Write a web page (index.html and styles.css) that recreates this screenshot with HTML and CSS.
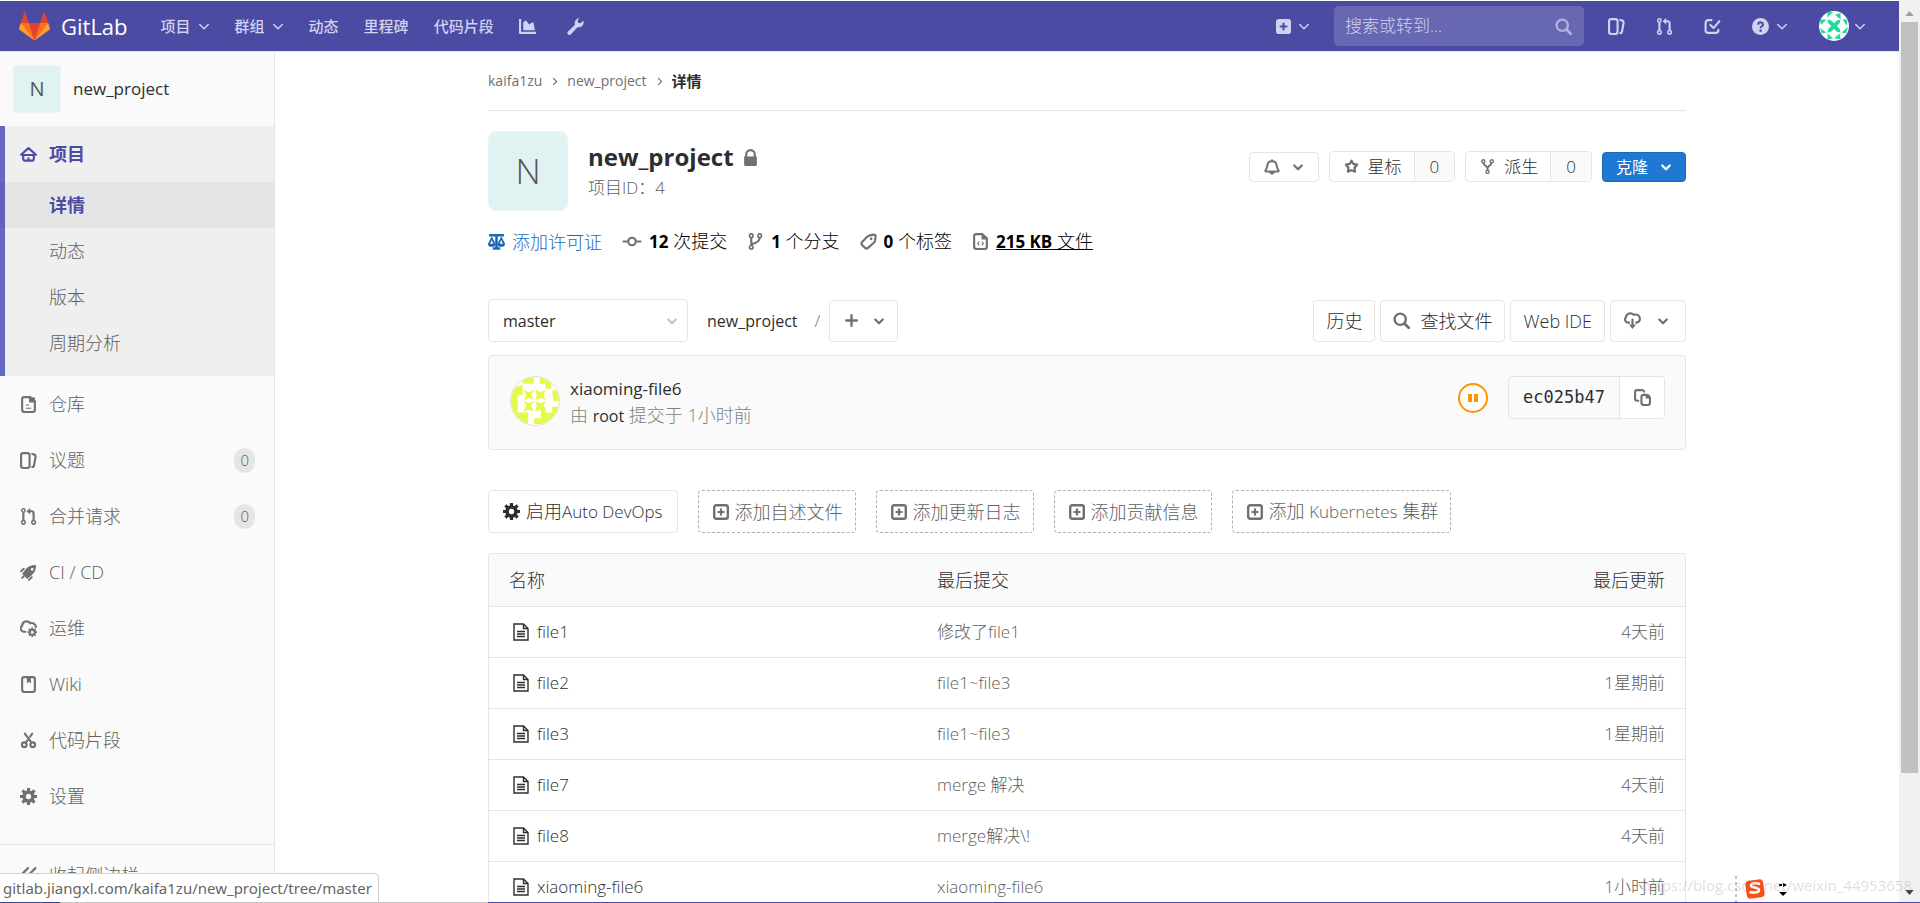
FILE: index.html
```html
<!DOCTYPE html>
<html lang="zh-CN">
<head>
<meta charset="utf-8">
<title>new_project · GitLab</title>
<link rel="stylesheet" href="styles.css">
</head>
<body>
<svg class="sprite" aria-hidden="true">
  <symbol id="chevron" viewBox="0 0 16 16"><path d="M8 10.243l-4.95-4.95a1 1 0 0 0-1.414 1.414l5.657 5.657a.997.997 0 0 0 1.414 0l5.657-5.657a1 1 0 0 0-1.414-1.414L8 10.243z"/></symbol>
  <symbol id="chevron-bold" viewBox="0 0 16 16"><path fill="none" stroke="currentColor" stroke-width="3" stroke-linecap="round" stroke-linejoin="round" d="M3 6l5 5 5-5"/></symbol>
  <symbol id="issues" viewBox="0 0 16 16"><path d="M10.458 15.012l.311.055a3 3 0 0 0 3.476-2.433l1.389-7.879A3 3 0 0 0 13.2 1.28L11.23.933a3.002 3.002 0 0 0-.824-.031c.364.59.58 1.28.602 2.02l1.845.325a1 1 0 0 1 .811 1.158l-1.389 7.879a1 1 0 0 1-1.158.81l-.118-.02a3.98 3.98 0 0 1-.541 1.938zM3 0h4a3 3 0 0 1 3 3v10a3 3 0 0 1-3 3H3a3 3 0 0 1-3-3V3a3 3 0 0 1 3-3zm0 2a1 1 0 0 0-1 1v10a1 1 0 0 0 1 1h4a1 1 0 0 0 1-1V3a1 1 0 0 0-1-1H3z"/></symbol>
  <symbol id="merge" viewBox="0 0 16 16"><g fill="none" stroke="currentColor"><g stroke-width="1.400"><circle cx="3.200" cy="2.300" r="1.600"/><circle cx="3.200" cy="13.500" r="1.700"/><circle cx="12.800" cy="13.500" r="1.700"/></g><path stroke-width="2" d="M3.200 4v7.800M12.800 11.800V5a2 2 0 0 0-2-2H8"/></g><path d="M6.200 3L9.500 0v6z"/></symbol>
  <symbol id="todo" viewBox="0 0 16 16"><g fill="none" stroke="currentColor" stroke-width="2" stroke-linecap="round"><path d="M7 2H4a2.500 2.500 0 0 0-2.500 2.500v7A2.500 2.500 0 0 0 4 14h7a2.500 2.500 0 0 0 2.500-2.500V11"/><path d="M6 6.500l3 3L14.500 3" stroke-linejoin="round"/></g></symbol>
  <symbol id="help" viewBox="0 0 16 16"><circle cx="8" cy="8" r="8"/><path d="M5.800 6.300C5.800 3.300 10.400 3.400 10.300 6.200 10.200 7.900 8.100 7.800 8.100 9.600" fill="none" stroke="#4b4ba3" stroke-width="1.900"/><circle cx="8.100" cy="12" r="1.200" fill="#4b4ba3"/></symbol>
  <symbol id="plus-solid" viewBox="0 0 16 16"><rect width="16" height="16" rx="3"/><path d="M8 4v8M4 8h8" stroke="#4b4ba3" stroke-width="2.200"/></symbol>
  <symbol id="plus-square" viewBox="0 0 16 16"><rect x="1.200" y="1.200" width="13.600" height="13.600" rx="2" fill="none" stroke="currentColor" stroke-width="2.400"/><path d="M8 4.500v7M4.500 8h7" stroke="currentColor" stroke-width="2.200"/></symbol>
  <symbol id="plus" viewBox="0 0 16 16"><path d="M8 3v10M3 8h10" stroke="currentColor" stroke-width="2.200" stroke-linecap="round"/></symbol>
  <symbol id="search" viewBox="0 0 16 16"><circle cx="6.800" cy="6.800" r="5.300" fill="none" stroke="currentColor" stroke-width="2.200"/><path d="M10.800 10.800l4 4" stroke="currentColor" stroke-width="2.600" stroke-linecap="round"/></symbol>
  <symbol id="chart" viewBox="0 0 16 16"><path d="M0 1h2v12h14v2H1a1 1 0 0 1-1-1zM4 11.500V4L6.500 2l3 4L11 5l2.500-1L15 11.500z"/></symbol>
  <symbol id="wrench" viewBox="0 0 16 16"><path d="M11.500.300a4.500 4.500 0 0 0-4 6L1 12.600a1.900 1.900 0 0 0 2.700 2.800L9.900 8.600a4.500 4.500 0 0 0 5.400-6L12.500 5 10.400 4.400 10 2.500z"/></symbol>
  <symbol id="home" viewBox="0 0 16 16"><path fill="none" stroke="currentColor" stroke-width="2" stroke-linecap="round" stroke-linejoin="round" d="M1 8.200h1.800M15 8.200h-1.800M1.500 7.800L8 2l6.500 5.800M3 8.500V12a1.800 1.800 0 0 0 1.800 1.800h6.400A1.800 1.800 0 0 0 13 12V8.500zM8 11.500v2"/></symbol>
  <symbol id="doc" viewBox="0 0 16 16"><path fill="none" stroke="currentColor" stroke-width="2" d="M9.500 1H4a2 2 0 0 0-2 2v10a2 2 0 0 0 2 2h8a2 2 0 0 0 2-2V5z"/><path d="M8.500 1L14 1.500V6H8.500zM5.500 8h3v1h-3zM5.500 11h5v1h-5z"/></symbol>
  <symbol id="doc-code" viewBox="0 0 16 16"><path fill="none" stroke="currentColor" stroke-width="2" d="M9.500 1H4a2 2 0 0 0-2 2v10a2 2 0 0 0 2 2h8a2 2 0 0 0 2-2V5z"/><path d="M9 1l5 5H9z"/><path fill="none" stroke="currentColor" d="M6.800 8L5.300 9.800l1.500 1.800M9.200 8l1.500 1.800-1.500 1.800"/></symbol>
  <symbol id="rocket" viewBox="0 0 16 16"><path fill-rule="evenodd" d="M15 1c.2 4-1 7-4 9.500L6.800 14 2 9.200l3.500-4.500C8 2 11 .8 15 1zm-3.600 2.700a1.300 1.300 0 1 0 0 2.600 1.300 1.300 0 0 0 0-2.600z"/><path stroke="currentColor" stroke-width="1.800" stroke-linecap="round" d="M1 7l2.500-2.500M8.500 15l2.500-2.500M2 13l1.500-1.500"/></symbol>
  <symbol id="gear" viewBox="0 0 16 16"><circle cx="8" cy="8" r="4.200" fill="none" stroke="currentColor" stroke-width="3.400"/><path fill="none" stroke="currentColor" stroke-width="3" d="M8 0v3M8 13v3M0 8h3M13 8h3M2.300 2.300l2.200 2.200M11.500 11.500l2.200 2.200M2.300 13.700l2.200-2.200M11.500 4.500l2.200-2.200"/></symbol>
  <symbol id="cloud-gear" viewBox="0 0 16 16"><path fill="none" stroke="currentColor" stroke-width="2" stroke-linecap="round" d="M5 11H4A3 3 0 0 1 2 5.500C2 1 7.500 0 9.500 3c3-.7 5.300 1 5.500 3.500"/><circle cx="11.500" cy="11.500" r="2.400" fill="none" stroke="currentColor" stroke-width="1.900"/><path stroke="currentColor" stroke-width="1.700" d="M11.500 7v2M11.500 14v2M7 11.500h2M14 11.500h2M8.300 8.300l1.400 1.400M13.300 13.300l1.400 1.400M8.300 14.700l1.400-1.400M13.300 9.700l1.400-1.400"/></symbol>
  <symbol id="book" viewBox="0 0 16 16"><rect x="2" y="1" width="12" height="14" rx="2" fill="none" stroke="currentColor" stroke-width="2"/><path d="M6.500 1.500h3.700V7L8.300 5.500 6.500 7z"/></symbol>
  <symbol id="scissors" viewBox="0 0 16 16"><g fill="none" stroke="currentColor" stroke-width="2" stroke-linecap="round"><circle cx="4" cy="12" r="2.200"/><circle cx="12" cy="12" r="2.200"/><path d="M4.500 1.500L10.800 10M11.500 1.500L9.500 4.500M7 8L5.200 10"/></g></symbol>
  <symbol id="collapse" viewBox="0 0 16 16"><path fill="none" stroke="currentColor" stroke-width="2" stroke-linecap="round" d="M7.500 2L1.500 8l6 6M14.500 2l-6 6 6 6"/></symbol>
  <symbol id="lock" viewBox="0 0 16 16"><path d="M2 7h12v7.500a1.500 1.500 0 0 1-1.500 1.500h-9A1.500 1.500 0 0 1 2 14.500z"/><path fill="none" stroke="currentColor" stroke-width="2" d="M4 8V5a4 4 0 0 1 8 0v3"/></symbol>
  <symbol id="scale" viewBox="0 0 16 16"><path fill="none" stroke="currentColor" stroke-width="2.400" d="M1 2.200h14M8 2v12M4.500 14.500h7"/><path d="M3.500 3L0 10a3.500 3 0 0 0 7 0zm0 3.500L5 10H2zM12.500 3L9 10a3.500 3 0 0 0 7 0zm0 3.500L14 10h-3z" fill-rule="evenodd"/></symbol>
  <symbol id="commit" viewBox="0 0 18 16"><circle cx="9" cy="8" r="3.500" fill="none" stroke="currentColor" stroke-width="2"/><path stroke="currentColor" stroke-width="2" stroke-linecap="round" d="M1 8h4M13 8h4"/></symbol>
  <symbol id="branch" viewBox="0 0 16 16"><g fill="none" stroke="currentColor" stroke-width="1.500"><circle cx="4" cy="2.500" r="1.700"/><circle cx="4" cy="13.500" r="1.700"/><circle cx="12" cy="2.500" r="1.700"/><path stroke-width="2" d="M4 4.200v7.600M4 10.500c5-1 8-2.500 8-6.300"/></g></symbol>
  <symbol id="tag" viewBox="0 0 16 16"><path fill="none" stroke="currentColor" stroke-width="2" stroke-linejoin="round" d="M8.500 2.500l4.500-1a1.500 1.500 0 0 1 1.700 1.700L14 7.500a3 3 0 0 1-.8 1.500L7.600 14a2 2 0 0 1-2.800 0L2 11.200a2 2 0 0 1 0-2.800l5-5a3 3 0 0 1 1.500-.9z"/><circle cx="10.500" cy="5.500" r="1.300"/></symbol>
  <symbol id="bell" viewBox="0 0 16 16"><path fill="none" stroke="currentColor" stroke-width="2" stroke-linejoin="round" d="M8 2.200c-3 0-4.500 1.900-4.700 4.300C3.200 9 2.500 10 1.500 11.300v1.200h13v-1.200C13.500 10 12.800 9 12.700 6.500 12.500 4.100 11 2.200 8 2.200z"/><path d="M5.500 13h5a2.500 2.500 0 0 1-5 0zM7 .500h2V2H7z"/></symbol>
  <symbol id="star" viewBox="0 0 16 16"><path fill="none" stroke="currentColor" stroke-width="2.400" stroke-linejoin="round" d="M8 1.900l1.900 3.400 4.100.8-2.800 3.100.6 4.300L8 12l-3.800 1.500.6-4.300L2 6.100l4.100-.8z"/></symbol>
  <symbol id="fork" viewBox="0 0 16 16"><g fill="none" stroke="currentColor" stroke-width="1.400"><circle cx="3.500" cy="2.500" r="1.700"/><circle cx="12.500" cy="2.500" r="1.700"/><circle cx="8" cy="13.700" r="1.700"/><path stroke-width="2" d="M3.700 4.300c0 3 4.300 2.500 4.300 5.700v2M12.300 4.300c0 3-4.300 2.500-4.300 5.700"/></g></symbol>
  <symbol id="cloud-down" viewBox="0 0 16 16"><path fill="none" stroke="currentColor" stroke-width="2" stroke-linecap="round" d="M4.800 10H4A3 3 0 0 1 1.800 5C2.200 1 7 .300 9.200 2.600c3-1 5.800.800 5.800 3.800A3.500 3.500 0 0 1 11.500 10M8 7v6"/><path d="M4.700 11.800h6.600L8 16z"/></symbol>
  <symbol id="copy" viewBox="0 0 16 16"><path fill="none" stroke="currentColor" stroke-width="2" stroke-linecap="round" d="M4 11H3a2 2 0 0 1-2-2V3a2 2 0 0 1 2-2h4.500a2 2 0 0 1 2 1.500"/><path fill="none" stroke="currentColor" stroke-width="2" d="M12 5.500H9a2 2 0 0 0-2 2V13a2 2 0 0 0 2 2h4a2 2 0 0 0 2-2V8z"/><path d="M11 5l4 .5V9h-4z"/></symbol>
  <symbol id="file" viewBox="0 0 16 18"><path fill="none" stroke="currentColor" stroke-width="1.400" d="M10.500 1H1v16h14V5.500zM10.500 1v4.500H15M4 8.500h8M4 11h8M4 13.500h8"/></symbol>
  <symbol id="identicon-tile" viewBox="0 0 50 50"><path d="M12 0h12v7H12zM30 0h12v12h-6v-5h-6zM0 12l12-4v11H7v6H0zM43 14h7v11h-6zM0 25h7v12h11v12H12L0 37zM50 37L38 49H24v-6h7V31h5v6h7v-6h7zM13 13l6 3 5-3-3 6 3 5-5-2-6 2 3-5zM25 13l6 3 5-3-2 6 2 5-5-2-6 2 2-5zM13 25l6 2 5-2-3 5 3 6-5-2-6 2 3-6zM25 25l6 2 5-2-2 5 2 6-5-2-6 2 2-6z"/></symbol>
  <symbol id="identicon-pinwheel" viewBox="0 0 32 32"><path d="M9 1l6 0-6 6zM23 2v7l-6-5zM1 9h7l-6 6zM30 9v7l-5-7zM1 18l7 5-5 1zM31 17l-2 7-5-1zM9 31v-7l6 5zM23 30l-7-1 6-5zM9 9l4 1 3 3 3-3 4-1-1 4-3 3 3 3 1 4-4-1-3-3-3 3-4 1 1-4 3-3-3-3z"/></symbol>
</svg>

<div class="window">
  <div class="page">
    <header class="navbar">
      <a class="brand" href="#">
        <svg class="tanuki" viewBox="0 0 36 36" aria-hidden="true"><path fill="#e24329" d="M2 14l9.380 9v-9l-4-12.280c-.205-.632-1.176-.632-1.380 0zM34 14l-9.380 9v-9l4-12.280c.205-.632 1.176-.632 1.380 0zM18 34.380L3 14h30z"/><path fill="#fc6d26" d="M18 34.380L11.380 14H2l4 11zM18 34.380L24.620 14H34l-4 11z"/><path fill="#fca326" d="M2 14L.1 20.160c-.18.565 0 1.200.5 1.560l17.420 12.660zM34 14l1.900 6.160c.18.565 0 1.200-.5 1.560L18 34.380z"/></svg>
        <span>GitLab</span>
      </a>
      <nav class="nav-left">
        <a href="#">项目<svg class="caret"><use href="#chevron"/></svg></a>
        <a href="#">群组<svg class="caret"><use href="#chevron"/></svg></a>
        <a href="#">动态</a>
        <a href="#">里程碑</a>
        <a href="#">代码片段</a>
        <a href="#" aria-label="图表"><svg class="icon"><use href="#chart"/></svg></a>
        <a href="#" aria-label="管理" class="nav-admin"><svg class="icon"><use href="#wrench"/></svg></a>
      </nav>
      <div class="nav-right">
        <a href="#" aria-label="新建"><svg class="icon small"><use href="#plus-solid"/></svg><svg class="caret"><use href="#chevron"/></svg></a>
        <form class="search"><input type="text" placeholder="搜索或转到..." aria-label="搜索或转到"><svg class="icon"><use href="#search"/></svg></form>
        <a href="#" aria-label="议题"><svg class="icon"><use href="#issues"/></svg></a>
        <a href="#" aria-label="合并请求"><svg class="icon"><use href="#merge"/></svg></a>
        <a href="#" aria-label="待办"><svg class="icon"><use href="#todo"/></svg></a>
        <a href="#" aria-label="帮助"><svg class="icon"><use href="#help"/></svg><svg class="caret"><use href="#chevron"/></svg></a>
        <a href="#" aria-label="用户"><svg class="avatar-user"><use href="#identicon-pinwheel"/></svg><svg class="caret"><use href="#chevron"/></svg></a>
      </div>
    </header>

    <div class="body">
      <aside class="sidebar">
        <a class="context" href="#"><span class="avatar-sm">N</span><span>new_project</span></a>
        <div class="active-group">
          <a class="item current" href="#"><svg class="icon"><use href="#home"/></svg>项目</a>
          <a class="sub selected" href="#">详情</a>
          <a class="sub" href="#">动态</a>
          <a class="sub" href="#">版本</a>
          <a class="sub" href="#">周期分析</a>
        </div>
        <a class="item" href="#"><svg class="icon"><use href="#doc"/></svg>仓库</a>
        <a class="item" href="#"><svg class="icon"><use href="#issues"/></svg>议题<span class="count">0</span></a>
        <a class="item" href="#"><svg class="icon"><use href="#merge"/></svg>合并请求<span class="count">0</span></a>
        <a class="item" href="#"><svg class="icon"><use href="#rocket"/></svg>CI / CD</a>
        <a class="item" href="#"><svg class="icon"><use href="#cloud-gear"/></svg>运维</a>
        <a class="item" href="#"><svg class="icon"><use href="#book"/></svg>Wiki</a>
        <a class="item" href="#"><svg class="icon"><use href="#scissors"/></svg>代码片段</a>
        <a class="item" href="#"><svg class="icon"><use href="#gear"/></svg>设置</a>
        <button class="item collapse" type="button"><svg class="icon"><use href="#collapse"/></svg>收起侧边栏</button>
      </aside>

      <main class="main">
        <div class="container">
          <nav class="crumbs">
            <a href="#">kaifa1zu</a><svg><use href="#chevron"/></svg>
            <a href="#">new_project</a><svg><use href="#chevron"/></svg>
            <a href="#" class="here">详情</a>
          </nav>

          <section class="project">
            <span class="avatar-lg">N</span>
            <div class="title">
              <h1>new_project<svg class="icon"><use href="#lock"/></svg></h1>
              <p>项目ID：4</p>
            </div>
            <div class="actions">
              <button type="button" class="btn-s notify" aria-label="通知"><svg class="icon"><use href="#bell"/></svg><svg class="chev"><use href="#chevron-bold"/></svg></button>
              <div class="pair"><button type="button"><svg class="icon"><use href="#star"/></svg>星标</button><a href="#">0</a></div>
              <div class="pair"><button type="button"><svg class="icon"><use href="#fork"/></svg>派生</button><a href="#">0</a></div>
              <button type="button" class="btn-s clone">克隆<svg class="chev"><use href="#chevron-bold"/></svg></button>
            </div>
          </section>

          <nav class="stats">
            <a class="license" href="#"><svg class="icon"><use href="#scale"/></svg>添加许可证</a>
            <a href="#"><svg class="icon wide"><use href="#commit"/></svg><span><b>12</b> 次提交</span></a>
            <a href="#"><svg class="icon"><use href="#branch"/></svg><span><b>1</b> 个分支</span></a>
            <a href="#"><svg class="icon"><use href="#tag"/></svg><span><b>0</b> 个标签</span></a>
            <a href="#"><svg class="icon"><use href="#doc-code"/></svg><span class="hovered"><b>215 KB</b> 文件</span></a>
          </nav>

          <div class="tree-bar">
            <div class="select"><select aria-label="分支"><option>master</option></select><svg class="chev"><use href="#chevron-bold"/></svg></div>
            <a class="root" href="#">new_project</a><span class="slash">/</span>
            <button type="button" class="btn add" aria-label="添加"><svg class="icon"><use href="#plus"/></svg><svg class="chev"><use href="#chevron-bold"/></svg></button>
            <div class="tree-actions">
              <a class="btn" href="#">历史</a>
              <a class="btn" href="#"><svg class="icon"><use href="#search"/></svg>查找文件</a>
              <a class="btn" href="#">Web IDE</a>
              <button type="button" class="btn download" aria-label="下载"><svg class="icon"><use href="#cloud-down"/></svg><svg class="chev"><use href="#chevron-bold"/></svg></button>
            </div>
          </div>

          <section class="commit">
            <svg class="avatar-commit"><use href="#identicon-tile"/></svg>
            <div class="commit-text">
              <a class="message" href="#">xiaoming-file6</a>
              <p>由 <a href="#">root</a> 提交于 1小时前</p>
            </div>
            <svg class="pipeline" viewBox="0 0 30 30" role="img" aria-label="等待中"><circle cx="15" cy="15" r="14" fill="#fff" stroke="#fc9403" stroke-width="2"/><path fill="#fc9403" d="M10 11h4v8h-4zM16 11h4v8h-4z"/></svg>
            <div class="sha"><code>ec025b47</code><button type="button" aria-label="复制"><svg class="icon"><use href="#copy"/></svg></button></div>
          </section>

          <div class="suggest">
            <a class="btn devops" href="#"><svg class="icon"><use href="#gear"/></svg><span>启用<span class="latin">Auto DevOps</span></span></a>
            <a class="btn dashed" href="#"><svg class="icon"><use href="#plus-square"/></svg>添加自述文件</a>
            <a class="btn dashed" href="#"><svg class="icon"><use href="#plus-square"/></svg>添加更新日志</a>
            <a class="btn dashed" href="#"><svg class="icon"><use href="#plus-square"/></svg>添加贡献信息</a>
            <a class="btn dashed" href="#"><svg class="icon"><use href="#plus-square"/></svg><span>添加 <span class="latin">Kubernetes</span> 集群</span></a>
          </div>

          <div class="files">
            <table>
              <thead><tr><th class="name">名称</th><th>最后提交</th><th class="when">最后更新</th></tr></thead>
              <tbody>
                <tr><td><a href="#"><svg><use href="#file"/></svg>file1</a></td><td>修改了file1</td><td class="when">4天前</td></tr>
                <tr><td><a href="#"><svg><use href="#file"/></svg>file2</a></td><td>file1~file3</td><td class="when">1星期前</td></tr>
                <tr><td><a href="#"><svg><use href="#file"/></svg>file3</a></td><td>file1~file3</td><td class="when">1星期前</td></tr>
                <tr><td><a href="#"><svg><use href="#file"/></svg>file7</a></td><td>merge 解决</td><td class="when">4天前</td></tr>
                <tr><td><a href="#"><svg><use href="#file"/></svg>file8</a></td><td>merge解决\!</td><td class="when">4天前</td></tr>
                <tr><td><a href="#"><svg><use href="#file"/></svg>xiaoming-file6</a></td><td>xiaoming-file6</td><td class="when">1小时前</td></tr>
              </tbody>
            </table>
          </div>
        </div>
      </main>
    </div>
  </div>
  <div class="scrollbar" aria-hidden="true">
    <svg viewBox="0 0 10 6"><path fill="#a0a0a0" d="M0 6l5-6 5 6z"/></svg>
    <div class="thumb"></div>
    <svg viewBox="0 0 10 6"><path fill="#404040" d="M0 0l5 6 5-6z"/></svg>
  </div>
  <div class="url-bubble">gitlab.jiangxl.com/kaifa1zu/new_project/tree/master</div>
  <div class="ime" aria-hidden="true">
    <svg viewBox="0 0 40 26"><path d="M5 0v26" stroke="#c4c4c4" stroke-width="2" stroke-dasharray="3 3"/><rect x="15" y="4" width="18" height="18" rx="4" fill="#fb4f14" transform="rotate(-8 24 13)"/><path d="M29 8c-4-1-9-1-9 1.500s8 1.500 8 4.500-6 3-9.500 2" fill="none" stroke="#fff" stroke-width="2.500"/></svg>
    <svg class="ime-menu" viewBox="0 0 8 16"><path d="M0 3h3v2H0zM4 2l4 2-4 2zM0 11h8l-4 4z"/></svg>
  </div>
  <div class="watermark">https://blog.csdn.net/weixin_44953658</div>
  <div class="taskbar" aria-hidden="true"></div>
</div>
</body>
</html>
```
FILE: styles.css
```css
* { box-sizing: border-box; }

body {
  margin: 0;
  color: #2e2e2e;
  background: #fff;
  font: 300 17px/24px "Open Sans", "Noto Sans", "Noto Sans CJK SC", sans-serif;
}

a { color: inherit; text-decoration: none; }
button, input, select { font: inherit; color: inherit; }
button { cursor: pointer; }
svg { fill: currentColor; flex: none; }
p, h1 { margin: 0; }

.sprite { position: absolute; width: 0; height: 0; }
.icon { width: 17px; height: 17px; color: #707070; }
.small { width: 15px; height: 15px; }
.caret { width: 12px; height: 12px; margin-left: 7px; }
.chev { width: 12px; height: 12px; color: #707070; }
.latin { font-size: 17px; }

.window { position: relative; display: flex; height: 100vh; overflow: hidden; }
.page { flex: 1; min-width: 0; display: flex; flex-direction: column; padding-top: 1px; }

/* Top navigation */
.navbar {
  display: flex;
  align-items: center;
  flex: none;
  height: 51px;
  padding: 0 33px 0 19px;
  background: #4b4ba3;
  border-bottom: 1px solid #e5e5e5;
  color: #d1d1f0;
  font-size: 15px;
  font-weight: 500;
}
.navbar a { display: flex; align-items: center; }
.navbar .icon { color: #d1d1f0; }
.brand { gap: 11px; color: #fff; font-size: 22px; font-weight: 400; }
.tanuki { width: 31px; height: 31px; }
.nav-left { display: flex; gap: 25px; margin-left: 33px; }
.nav-admin { padding-left: 6px; }
.nav-right { display: flex; align-items: center; gap: 31px; margin-left: auto; }
.search {
  display: flex;
  align-items: center;
  width: 250px;
  height: 40px;
  margin: 0 -7px;
  padding: 0 12px 0 11px;
  border-radius: 5px;
  background: #6868b2;
}
.search input {
  flex: 1;
  min-width: 0;
  padding: 0;
  border: 0;
  outline: 0;
  background: none;
  font-size: 17px;
  font-weight: 300;
}
.search input::placeholder { color: #d1d1f0; opacity: 1; }
.search .icon { opacity: .7; }
.avatar-user { width: 30px; height: 30px; border-radius: 50%; background: #fff; color: #24d99b; }
.avatar-user + .caret { margin-left: 5px; }

/* Sidebar */
.body { display: flex; flex: 1; min-height: 0; }
.sidebar {
  flex: none;
  width: 275px;
  background: #fafafa;
  border-right: 1px solid #e5e5e5;
  color: #606060;
  overflow: hidden;
}
.context {
  display: flex;
  align-items: center;
  gap: 12px;
  height: 74px;
  padding-left: 13px;
  color: #2e2e2e;
  font-size: 17px;
  font-weight: 500;
}
.avatar-sm, .avatar-lg {
  display: grid;
  place-items: center;
  background: #e0f2f1;
  color: #555;
  border: 1px solid #edf3f3;
}
.avatar-sm { width: 48px; height: 48px; border-radius: 3px; font-size: 20px; font-weight: 400; }
.active-group { padding-bottom: 10px; background: #efefef; box-shadow: inset 5px 0 #6666c4; }
.item {
  display: flex;
  align-items: center;
  gap: 12px;
  width: 100%;
  height: 56px;
  padding: 0 19px 0 20px;
  font-size: 18px;
}
.item.current, .sub.selected { color: #4b4ba3; font-weight: 700; }
.item.current .icon { color: #4b4ba3; }
.sub { display: flex; align-items: center; height: 46px; padding-left: 49px; font-size: 18px; }
.sub.selected { background: rgba(0, 0, 0, .04); }
.count {
  margin-left: auto;
  padding: 0 6px;
  border-radius: 12px;
  background: #e5e5e5;
  font-size: 15px;
  line-height: 25px;
}
.collapse { margin-top: 20px; border: 0; border-top: 1px solid #e5e5e5; background: none; height: 60px; }

/* Main column */
.main { flex: 1; min-width: 0; padding: 0 40px; overflow: hidden; }
.container { max-width: 1198px; margin: 0 auto; }
.crumbs {
  display: flex;
  align-items: center;
  gap: 8px;
  height: 59px;
  border-bottom: 1px solid #e5e5e5;
  color: #707070;
  font-size: 14px;
  font-weight: 400;
}
.crumbs svg { width: 9px; height: 9px; transform: rotate(-90deg); }
.crumbs .here { color: #2e2e2e; font-size: 15px; font-weight: 700; }

.project { display: flex; align-items: flex-start; padding-top: 20px; }
.avatar-lg { width: 80px; height: 80px; border-radius: 8px; font-size: 35px; font-weight: 300; }
.title { margin: 9px 0 0 20px; }
.title h1 { display: flex; align-items: center; gap: 8px; font-size: 24px; font-weight: 700; line-height: 34px; }
.title p { color: #606060; line-height: 28px; }
.actions { display: flex; align-items: center; gap: 10px; margin: 20px 0 0 auto; font-size: 16px; }
.btn-s {
  display: flex;
  align-items: center;
  height: 30px;
  padding: 0 14px;
  border: 1px solid #e5e5e5;
  border-radius: 4px;
  background: #fff;
}
.notify { gap: 12px; }
.notify .icon { width: 16px; height: 16px; }
.clone { gap: 12px; padding: 0 13px; background: #1f78d1; border-color: #1b69b6; color: #fff; font-weight: 400; }
.clone .chev { color: #fff; }
.pair { display: flex; height: 31px; border: 1px solid #e5e5e5; border-radius: 4px; background: #fff; overflow: hidden; }
.pair button { display: flex; align-items: center; gap: 9px; padding: 0 12px 0 14px; border: 0; background: none; font-size: 17px; }
.pair .icon { width: 15px; height: 15px; }
.pair a { display: flex; align-items: center; padding: 0 15px; border-left: 1px solid #e5e5e5; background: #fafafa; font-size: 17px; }

.stats { display: flex; gap: 20px; margin-top: 17px; color: #000; font-size: 18px; }
.stats a { display: flex; align-items: center; gap: 7px; line-height: 26px; }
.stats .license, .stats .license .icon { color: #1b69b6; }
.stats .wide { width: 20px; }
.stats .hovered { text-decoration: underline; }
.stats b { font-size: 17px; font-weight: 700; }

.btn {
  display: inline-flex;
  align-items: center;
  gap: 10px;
  height: 42px;
  padding: 0 12px;
  border: 1px solid #e5e5e5;
  border-radius: 4px;
  background: #fff;
  font-size: 18px;
  white-space: nowrap;
}
.tree-bar { display: flex; align-items: center; margin-top: 44px; }
.select { position: relative; display: flex; align-items: center; width: 200px; }
.select select {
  appearance: none;
  width: 100%;
  height: 43px;
  padding: 0 14px;
  border: 1px solid #e5e5e5;
  border-radius: 4px;
  background: #fff;
  font-size: 16px;
  font-weight: 400;
}
.select .chev { position: absolute; right: 10px; color: #c4c4c4; }
.root { margin-left: 19px; font-size: 16px; font-weight: 400; }
.slash { margin: 0 9px 0 17px; color: #707070; }
.add { gap: 13px; padding-left: 13px; }
.tree-actions { display: flex; gap: 5px; margin-left: auto; }
.download { gap: 16px; padding: 0 16px 0 13px; }

.commit {
  display: flex;
  align-items: flex-start;
  margin-top: 13px;
  padding: 20px 20px 20px 21px;
  border: 1px solid #e5e5e5;
  border-radius: 4px;
  background: #fafafa;
}
.avatar-commit { width: 50px; height: 50px; border: 1px solid #e0e0e0; border-radius: 50%; background: #fff; color: #e6f94a; }
.commit-text { margin-left: 10px; line-height: 26px; }
.message { font-size: 17px; font-weight: 500; }
.commit-text p { color: #808080; font-size: 18px; }
.commit-text p a { color: #2e2e2e; font-size: 16px; font-weight: 400; }
.pipeline { width: 30px; height: 30px; margin: 7px 20px 0 auto; }
.sha { display: flex; height: 43px; border: 1px solid #e5e5e5; border-radius: 4px; overflow: hidden; }
.sha code { padding: 0 14px; font: 400 17px/41px "DejaVu Sans Mono", monospace; }
.sha button { width: 45px; padding: 0; border: 0; border-left: 1px solid #e5e5e5; background: #fff; line-height: 0; }

.suggest { display: flex; gap: 20px; margin-top: 40px; }
.suggest .btn { height: 43px; gap: 6px; }
.suggest .devops { padding: 0 14px; }
.suggest .devops .icon { color: #2e2e2e; }
.suggest .dashed { border: 1px dashed #b0b0b0; color: #606060; }
.dashed .icon { width: 16px; height: 16px; margin-left: 2px; }

.files { margin-top: 20px; border: 1px solid #e5e5e5; border-bottom: 0; border-radius: 4px 4px 0 0; overflow: hidden; }
.files table { width: 100%; border-collapse: collapse; table-layout: fixed; }
.files th, .files td { height: 51px; padding: 0 20px; border-bottom: 1px solid #e5e5e5; text-align: left; }
.files th { height: 52px; background: #fafafa; font-size: 18px; font-weight: 300; }
.files .name { width: 428px; }
.files .when { text-align: right; }
.files td { color: #606060; font-size: 17px; }
.files td a { display: flex; align-items: center; gap: 8px; padding-left: 4px; color: #2e2e2e; font-size: 17px; }
.files td svg { width: 16px; height: 18px; }

/* Browser chrome drawn over the page */
.scrollbar {
  display: flex;
  flex: none;
  flex-direction: column;
  align-items: center;
  width: 21px;
  padding: 11px 0 8px;
  background: #f1f1f1;
}
.scrollbar svg { width: 9px; height: 5px; }
.thumb { width: 17px; height: 85%; margin: 6px 0 auto; background: #c1c1c1; }
.url-bubble {
  position: absolute;
  left: -1px;
  bottom: 0;
  padding: 0 6px 0 3px;
  border: 1px solid #d0d0d0;
  border-radius: 0 4px 0 0;
  background: #fff;
  color: #666;
  font-family: "Noto Sans", sans-serif;
  font-size: 15px;
  font-weight: 400;
  line-height: 28px;
}
.ime { position: absolute; right: 133px; bottom: 1px; display: flex; align-items: center; gap: 8px; background: #fff; }
.ime > svg { width: 40px; height: 26px; color: #000; }
.ime .ime-menu { width: 8px; height: 16px; }
.watermark {
  position: absolute;
  right: 8px;
  bottom: 6px;
  color: rgba(120, 120, 120, .25);
  font-size: 15px;
  font-weight: 400;
}
.taskbar { position: absolute; inset: auto 0 0; height: 1px; background: linear-gradient(90deg, #3b4a8a 60px, #c4c4c4 60px 488px, #4b4ba3 488px); }
```
